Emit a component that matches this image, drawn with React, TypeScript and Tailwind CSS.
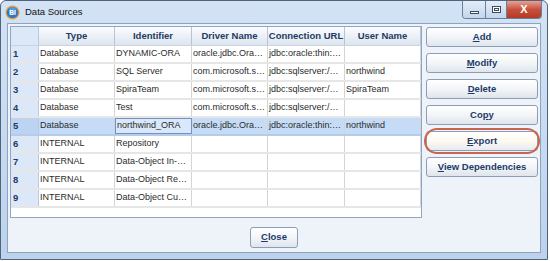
import React from 'react'

type Row = {
  type: string
  identifier: string
  driver: string
  url: string
  user: string
}

const rows: Row[] = [
  { type: 'Database', identifier: 'DYNAMIC-ORA', driver: 'oracle.jdbc.Ora…', url: 'jdbc:oracle:thin:…', user: '' },
  { type: 'Database', identifier: 'SQL Server', driver: 'com.microsoft.s…', url: 'jdbc:sqlserver:/…', user: 'northwind' },
  { type: 'Database', identifier: 'SpiraTeam', driver: 'com.microsoft.s…', url: 'jdbc:sqlserver:/…', user: 'SpiraTeam' },
  { type: 'Database', identifier: 'Test', driver: 'com.microsoft.s…', url: 'jdbc:sqlserver:/…', user: '' },
  { type: 'Database', identifier: 'northwind_ORA', driver: 'oracle.jdbc.Ora…', url: 'jdbc:oracle:thin:…', user: 'northwind' },
  { type: 'INTERNAL', identifier: 'Repository', driver: '', url: '', user: '' },
  { type: 'INTERNAL', identifier: 'Data-Object In-…', driver: '', url: '', user: '' },
  { type: 'INTERNAL', identifier: 'Data-Object Re…', driver: '', url: '', user: '' },
  { type: 'INTERNAL', identifier: 'Data-Object Cu…', driver: '', url: '', user: '' },
]

const headers = ['Type', 'Identifier', 'Driver Name', 'Connection URL', 'User Name']

const cols = 'grid grid-cols-[28px_76px_77px_76px_77px_76px]'

// mnemonic letter underlined, like a win32 button
function Label({ text, at }: { text: string; at: number }) {
  return (
    <span>
      {text.slice(0, at)}
      <span className="underline underline-offset-[1px]">{text[at]}</span>
      {text.slice(at + 1)}
    </span>
  )
}

function Btn({ text, at, className = '' }: { text: string; at: number; className?: string }) {
  return (
    <div
      className={`h-[20px] flex items-center justify-center rounded-[3px] border border-[#8d9db5] bg-gradient-to-b from-[#ffffff] via-[#f3f5f8] to-[#dfe5ed] text-[9.5px] font-bold text-[#1d3b6a] shadow-[inset_0_1px_0_#ffffff] ${className}`}
    >
      <Label text={text} at={at} />
    </div>
  )
}

export default function App() {
  return (
    <div className="w-[550px] h-[261px] bg-white font-['Liberation_Sans',sans-serif]">
      <div className="w-[548px] h-[260px] flex flex-col rounded-t-[6px] border border-[#51647e] bg-gradient-to-b from-[#d3e3f5] to-[#bcd2ec]">
        {/* title bar */}
        <div className="h-[22px] flex items-start">
          <div className="flex items-center gap-[5px] pl-[4px] pt-[4px]">
            <svg width="15" height="15" viewBox="0 0 16 16">
              <circle cx="8" cy="8" r="7.5" fill="#e9a33b" />
              <circle cx="8" cy="8" r="6.2" fill="#2f79c4" />
              <circle cx="8" cy="6" r="4" fill="#6fb0ea" opacity="0.6" />
              <text x="8" y="11" textAnchor="middle" fontSize="7" fontWeight="bold" fill="#ffffff" fontFamily="Liberation Sans, sans-serif">
                BI
              </text>
            </svg>
            <span className="text-[9.5px] text-[#111111]">Data Sources</span>
          </div>
          <div className="ml-auto mr-[5px] flex h-[18px] rounded-b-[4px] border border-t-0 border-[#6a7f9c] overflow-hidden">
            <div className="w-[23px] flex items-center justify-center bg-gradient-to-b from-[#e3edf8] to-[#c4d6ec] border-r border-[#6a7f9c]">
              <div className="w-[9px] h-[3px] bg-white border border-[#3d4b5f] mt-[5px]" />
            </div>
            <div className="w-[21px] flex items-center justify-center bg-gradient-to-b from-[#e3edf8] to-[#c4d6ec] border-r border-[#6a7f9c]">
              <div className="w-[9px] h-[7px] border border-[#3d4b5f] bg-white p-[1px]">
                <div className="w-full h-full border border-[#3d4b5f]" />
              </div>
            </div>
            <div className="w-[34px] flex items-center justify-center bg-gradient-to-b from-[#e8a192] via-[#c7503c] to-[#b33a25]">
              <span className="text-[11px] font-bold text-white leading-none">X</span>
            </div>
          </div>
        </div>

        {/* client area */}
        <div className="flex-1 mx-[6px] mb-[6px] border border-[#8ea3c0] bg-[#eef3fa] flex flex-col">
          <div className="flex gap-[4px] pl-[2px] pt-[2px]">
            {/* grid */}
            <div className="w-[412px] h-[192px] border border-[#8fa5c3] bg-white flex flex-col">
              <div className={`${cols} h-[19px] border-b border-[#c8d3e3]`}>
                <div className="bg-[#dce8f7] border-r border-[#b8c9e0]" />
                {headers.map((h) => (
                  <div
                    key={h}
                    className="flex items-center justify-center bg-gradient-to-b from-[#fbfcfe] to-[#dde5ef] border-r border-[#b8c4d4] text-[9.5px] font-bold text-[#1e3b63]"
                  >
                    {h}
                  </div>
                ))}
              </div>
              {rows.map((r, i) => {
                const sel = i === 4
                const cells = [r.type, r.identifier, r.driver, r.url, r.user]
                return (
                  <div
                    key={i}
                    className={`${cols} h-[18px] border-b-2 ${sel ? 'border-[#b6cbe8] bg-[#c6dbf6]' : 'border-[#e6e6e6]'}`}
                  >
                    <div className={`flex items-center pl-[2px] text-[9.5px] font-bold text-[#1e3b63] border-r border-[#b8c9e0] ${sel ? 'bg-[#bcd3f2]' : 'bg-[#dce8f7]'}`}>
                      {i + 1}
                    </div>
                    {cells.map((c, j) => (
                      <div
                        key={j}
                        className={`flex items-center pl-[1px] text-[9px] text-[#2b2b2b] whitespace-nowrap overflow-hidden ${
                          sel && j === 1 ? 'border border-[#6f93c6] bg-[#dbe8fa]' : 'border-r border-[#d4d4d4]'
                        }`}
                      >
                        {c}
                      </div>
                    ))}
                  </div>
                )
              })}
            </div>

            {/* buttons */}
            <div className="w-[112px] flex flex-col gap-[6px] pt-[1px]">
              <Btn text="Add" at={0} />
              <Btn text="Modify" at={0} />
              <Btn text="Delete" at={0} />
              <Btn text="Copy" at={2} />
              <div className="relative">
                <Btn text="Export" at={0} className="from-[#fde7b4] via-[#fffaf0] to-[#e6eaf0]" />
                <div className="absolute -inset-x-[2px] -inset-y-[3px] rounded-full border-2 border-[#c9644f]" />
              </div>
              <Btn text="View Dependencies" at={0} />
            </div>
          </div>

          <div className="flex justify-center pt-[9px]">
            <Btn text="Close" at={0} className="w-[48px] h-[21px]" />
          </div>
        </div>
      </div>
    </div>
  )
}
